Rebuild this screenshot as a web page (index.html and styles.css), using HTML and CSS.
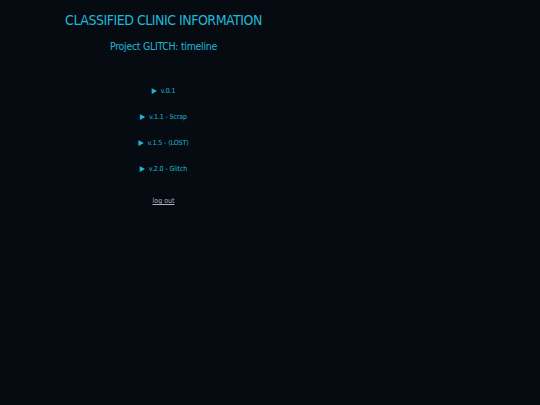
FILE: index.html
```html
<!DOCTYPE html>
<html>
<head>
<meta charset="utf-8">
<link rel="stylesheet" href="styles.css">
</head>
<body>
<main class="page">
  <h1 class="title">CLASSIFIED CLINIC INFORMATION</h1>
  <h2 class="subtitle">Project GLITCH: timeline</h2>
  <ul class="versions">
    <li><span class="arrow">&#9654;</span> v.0.1</li>
    <li><span class="arrow">&#9654;</span> v.1.1 - Scrap</li>
    <li><span class="arrow">&#9654;</span> v.1.5 - (LOST)</li>
    <li><span class="arrow">&#9654;</span> v.2.0 - Glitch</li>
  </ul>
  <a class="logout" href="#">log out</a>
</main>
</body>
</html>
```
FILE: styles.css
```css
html, body {
  margin: 0;
  padding: 0;
  background: #060b12;
}
body {
  padding: 8px;
  font-family: "DejaVu Sans Condensed", "Liberation Sans", sans-serif;
  color: #20b6d6;
}
.page {
  width: 311px;
  display: flex;
  flex-direction: column;
  align-items: center;
}
.title {
  margin: 4px 0 0;
  font-size: 14px;
  font-weight: normal;
  line-height: 16px;
  letter-spacing: -0.48px;
}
.subtitle {
  margin: 11px 0 0;
  font-size: 10.5px;
  font-weight: normal;
  line-height: 14px;
  letter-spacing: -0.3px;
}
.versions {
  list-style: none;
  margin: 33px 0 0;
  padding: 0;
  display: flex;
  flex-direction: column;
  align-items: center;
  gap: 16px;
  font-size: 7px;
  line-height: 10px;
  letter-spacing: -0.1px;
}
.arrow {
  font-size: 7.5px;
  margin-right: 2px;
}
.logout {
  margin-top: 23px;
  font-size: 7px;
  color: #aab4be;
  text-decoration: underline;
}
```
